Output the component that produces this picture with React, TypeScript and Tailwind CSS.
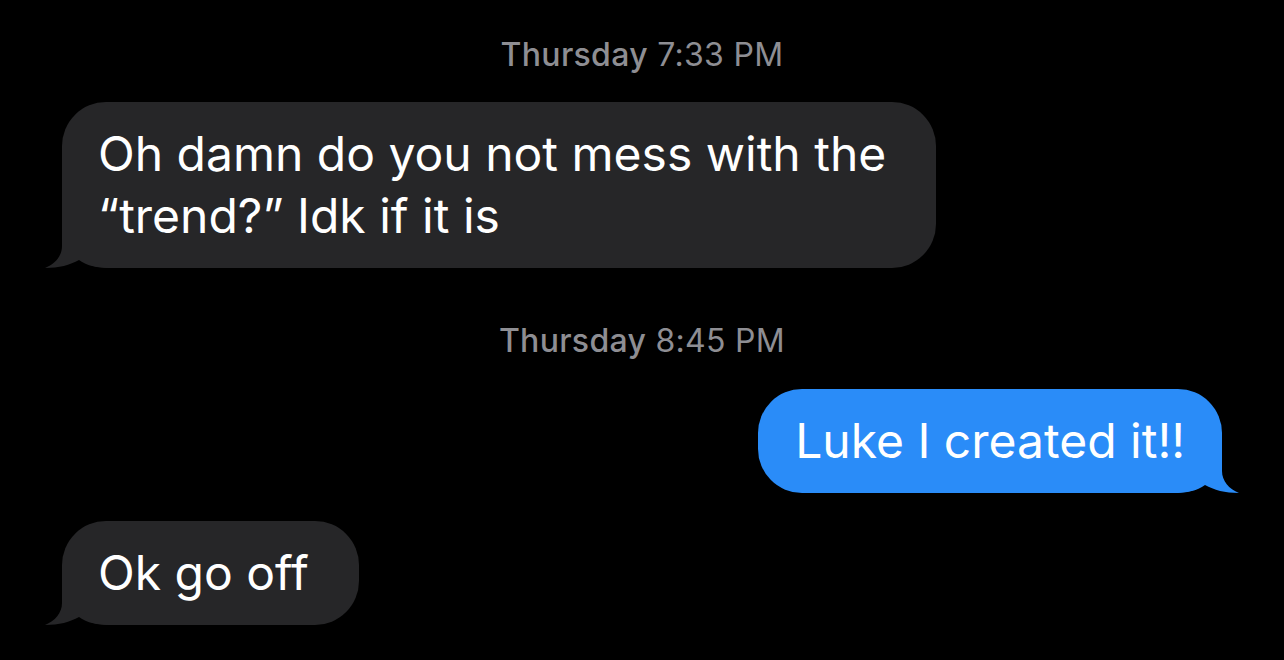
import * as React from "react";

function Tail({ side, color }: { side: "left" | "right"; color: string }) {
  const pos = side === "left" ? "-left-[17px]" : "-right-[17px] -scale-x-100";
  return (
    <svg
      className={`absolute bottom-0 ${pos}`}
      width="70"
      height="48"
      viewBox="0 0 70 48"
    >
      <path
        d="M17 0 L17 26 C17 36 10 44 0 48 C14 48 25 45 34 40 C42 46 52 48 70 48 L70 0 Z"
        fill={color}
      />
    </svg>
  );
}

function Stamp({ day, time }: { day: string; time: string }) {
  return (
    <div className="text-center text-[32px] leading-none text-[#8e8e93] tracking-[0.3px]">
      <span className="font-medium">{day}</span> <span>{time}</span>
    </div>
  );
}

function Incoming({ children }: { children: React.ReactNode }) {
  return (
    <div className="relative self-start ml-[62px] rounded-[44px] bg-[#262628] pl-[36px] pr-[50px] py-[21px] text-white text-[48px] leading-[62px]">
      <Tail side="left" color="#262628" />
      <span className="relative">{children}</span>
    </div>
  );
}

function Outgoing({ children }: { children: React.ReactNode }) {
  return (
    <div className="relative self-end mr-[62px] rounded-[44px] bg-[#2a8cf8] px-[37px] py-[21px] text-white text-[48px] leading-[62px]">
      <Tail side="right" color="#2a8cf8" />
      <span className="relative">{children}</span>
    </div>
  );
}

export default function App() {
  return (
    <div
      className="w-[1284px] h-[660px] bg-black flex flex-col overflow-hidden"
      style={{ fontFamily: "Inter, 'Noto Sans', sans-serif" }}
    >
      <div className="pt-[39px] pb-[31px]">
        <Stamp day="Thursday" time="7:33 PM" />
      </div>
      <Incoming>
        Oh damn do you not mess with the
        <br />
        “trend?” Idk if it is
      </Incoming>
      <div className="pt-[57px] pb-[32px]">
        <Stamp day="Thursday" time="8:45 PM" />
      </div>
      <Outgoing>Luke I created it!!</Outgoing>
      <div className="h-[28px]" />
      <Incoming>Ok go off</Incoming>
    </div>
  );
}
